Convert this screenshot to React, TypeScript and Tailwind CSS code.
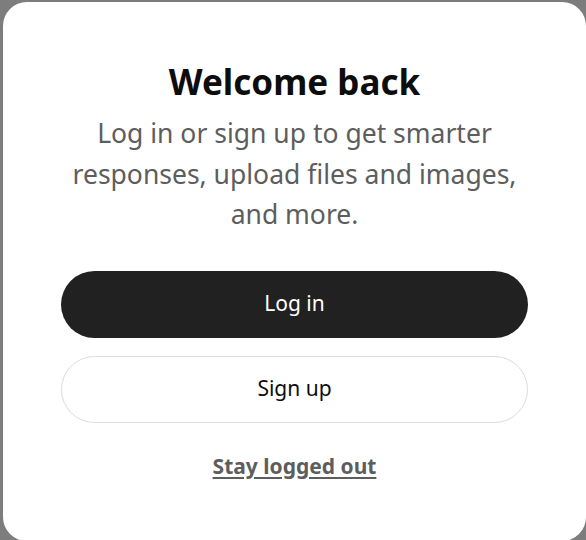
import React from "react";

const App = () => {
  return (
    <div className="h-[540px] w-[586px] overflow-hidden bg-[#7d7d7d] pl-[3px] pt-[2px]">
      <div
        className="flex h-[539px] w-[583px] flex-col items-center rounded-[24px] bg-white pt-[56px]"
        style={{ fontFamily: '"Noto Sans", "Open Sans", sans-serif' }}
      >
        <h2 className="text-[35px] font-bold leading-[48px] text-[#0d0d0d]">Welcome back</h2>
        <p className="mt-[7px] w-[470px] text-center text-[26.5px] leading-[40.5px] text-[#5d5d5d]">
          Log in or sign up to get smarter responses, upload files and images, and more.
        </p>
        <div className="mt-[36px] flex w-[467px] flex-col gap-[18px]">
          <button className="h-[67px] w-full rounded-full bg-[#212121] text-[21px] text-white">
            Log in
          </button>
          <button className="h-[67px] w-full rounded-full border border-[#dcdcdc] bg-white text-[21px] text-[#0d0d0d]">
            Sign up
          </button>
        </div>
        <a className="mt-[29px] text-[21px] font-bold leading-[28px] text-[#5d5d5d] underline underline-offset-[3px]">
          Stay logged out
        </a>
      </div>
    </div>
  );
};

export default App;
